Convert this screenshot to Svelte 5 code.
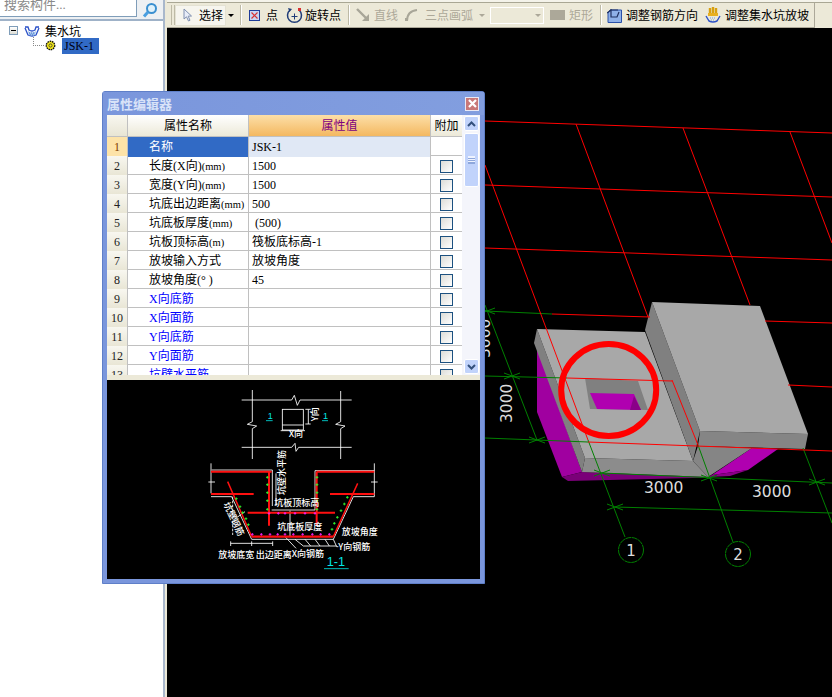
<script>
  const rows = [
    { n: 1, name: "名称", unit: "", value: "JSK-1", check: false },
    { n: 2, name: "长度(X向)", unit: "(mm)", value: "1500", check: true },
    { n: 3, name: "宽度(Y向)", unit: "(mm)", value: "1500", check: true },
    { n: 4, name: "坑底出边距离", unit: "(mm)", value: "500", check: true },
    { n: 5, name: "坑底板厚度", unit: "(mm)", value: " (500)", check: true },
    { n: 6, name: "坑板顶标高", unit: "(m)", value: "筏板底标高-1", check: true },
    { n: 7, name: "放坡输入方式", unit: "", value: "放坡角度", check: true },
    { n: 8, name: "放坡角度(° )", unit: "", value: "45", check: true },
    { n: 9, name: "X向底筋", unit: "", value: "", check: true, link: true },
    { n: 10, name: "X向面筋", unit: "", value: "", check: true, link: true },
    { n: 11, name: "Y向底筋", unit: "", value: "", check: true, link: true },
    { n: 12, name: "Y向面筋", unit: "", value: "", check: true, link: true },
    { n: 13, name: "坑壁水平筋", unit: "", value: "", check: true, link: true }
  ];

  // scene segments in page coordinates
  const red = [
    [485, 121, 832, 133], [485, 185, 832, 197], [485, 248, 832, 260],
    [552, 314, 650, 317], [765, 321, 832, 323],
    [567, 378, 672, 381], [788, 385, 832, 387],
    [588, 442, 832, 451],
    [485, 165, 588, 440],
    [576, 124, 648, 317], [672, 380, 698, 445],
    [683, 128, 750, 305],
    [790, 132, 832, 243]
  ];
  const green = [
    [485, 311, 552, 314], [485, 376, 567, 378], [485, 438, 588, 442],
    [602, 473, 832, 483], [615, 507, 832, 513],
    [485, 305, 537, 440],
    [588, 440, 625, 537], [698, 445, 733, 542], [803, 448, 832, 523]
  ];
  const ticks = [
    [487, 311], [512, 376], [537, 440], [602, 473], [615, 507], [709, 478], [817, 482]
  ];

  const greenDots = [
    [232, 292], [232, 314], [232, 338], [232, 362], [232, 388],
    [381, 292], [381, 314], [381, 338], [381, 362], [381, 388],
    [139, 356], [150, 380], [158, 398], [168, 416], [175, 434],
    [472, 352], [463, 372], [453, 392], [442, 412], [433, 430], [426, 448]
  ];
  const pinkDots = [
    [237, 400], [265, 400], [285, 400], [315, 400], [345, 400], [375, 400],
    [187, 463], [214, 463], [240, 463], [263, 463], [285, 463], [310, 463], [338, 463], [367, 463], [392, 463], [418, 463]
  ];
</script>

<div class="app">
  <aside class="side">
    <div class="search">
      <div class="search-box">搜索构件...</div>
      <div class="search-btn">
        <svg width="16" height="16" viewBox="0 0 16 16">
          <circle cx="9.5" cy="6.5" r="4.5" fill="#dff1fb" stroke="#3a8fd0" stroke-width="2" />
          <path d="M6 10 L2 14.5" stroke="#4a9fe0" stroke-width="3" />
        </svg>
      </div>
    </div>
    <div class="tree">
      <div class="node">
        <span class="toggle"></span>
        <svg width="16" height="13" viewBox="0 0 16 13">
          <path d="M1 3 H4 L5 6 Q8 8 11 6 L12 3 H15 M1 4 L4 11 Q8 13 12 11 L15 4" fill="none" stroke="#2a50c8" stroke-width="1.3" />
          <path d="M4 7 Q8 10 12 7 L11 11 Q8 12 5 11 Z" fill="#9cc0ea" />
          <path d="M5 9 H11 M6 11 H10" stroke="#3060c0" stroke-width=".8" stroke-dasharray="1 1" />
        </svg>
        <span class="node-text">集水坑</span>
      </div>
      <div class="node child">
        <span class="dots"></span>
        <svg width="11" height="11" viewBox="0 0 11 11">
          <circle cx="5.5" cy="5.5" r="4.2" fill="#f4e818" stroke="#111" stroke-width="1.4" stroke-dasharray="1.6 .7" />
          <circle cx="5.5" cy="5.5" r="1.6" fill="#f4e818" stroke="#333" stroke-width=".8" />
        </svg>
        <span class="picked">JSK-1</span>
      </div>
    </div>
  </aside>

  <main class="main">
    <div class="topline"></div>
    <div class="toolbar">
      <div class="bar">
        <span class="grip"></span>
        <div class="tool active">
          <svg width="10" height="14" viewBox="0 0 10 14">
            <path d="M1 1 V11 L3.5 8.8 L5.5 13 L7 12.3 L5.2 8.2 L8.5 8 Z" fill="#e8edf8" stroke="#8090b0" />
          </svg>
          <span>选择</span>
        </div>
        <span class="arrow dark"></span>
        <span class="sep s1"></span>
        <svg class="ic-point" width="11" height="11" viewBox="0 0 11 11">
          <rect x=".5" y=".5" width="10" height="10" fill="#c8d4f4" stroke="#1f3c98" />
          <path d="M2.5 2.5 L8.5 8.5 M8.5 2.5 L2.5 8.5" stroke="#d83030" stroke-width="1.2" />
        </svg>
        <span class="label l-point">点</span>
        <svg class="ic-rot" width="17" height="17" viewBox="0 0 17 17">
          <path d="M4 3 A7 7 0 1 0 13 3" fill="none" stroke="#1f3c78" stroke-width="1.5" />
          <path d="M2 1 L6 2 L3.5 5 Z" fill="#1f3c78" />
          <path d="M8.5 6.5 V12.5 M5.5 9.5 H11.5" stroke="#1f3c78" />
          <rect x="12" y="1" width="3" height="3" fill="#d83030" />
        </svg>
        <span class="label l-rot">旋转点</span>
        <span class="sep s2"></span>
        <svg class="ic-line" width="14" height="14" viewBox="0 0 14 14">
          <path d="M1 1 L11 11" stroke="#a8a698" stroke-width="2.4" />
          <path d="M13 6 V13 H6 Z" fill="#a8a698" />
        </svg>
        <span class="label off l-line">直线</span>
        <svg class="ic-arc" width="13" height="14" viewBox="0 0 13 14">
          <path d="M2 13 Q2 3 12 2" fill="none" stroke="#a8a698" stroke-width="2" />
          <rect x="0" y="10" width="3" height="3" fill="#a8a698" />
        </svg>
        <span class="label off l-arc">三点画弧</span>
        <span class="arrow l-a"></span>
        <div class="combo"><span class="arrow"></span></div>
        <span class="rect-ic"></span>
        <span class="label off l-rect">矩形</span>
        <span class="sep s3"></span>
        <svg class="ic-dir" width="15" height="15" viewBox="0 0 15 15">
          <path d="M3 2 H14.5 V14.5 H1 V5 Z" fill="#8fb0e8" stroke="#2a50a8" />
          <path d="M0 5 L4 2 H11 M4 1 V9 H10 L12 4" fill="none" stroke="#203060" stroke-width="1.2" />
        </svg>
        <span class="label l-dir">调整钢筋方向</span>
        <svg class="ic-slope" width="16" height="16" viewBox="0 0 16 16">
          <path d="M5 1 V8 M8 0 V8 M11 1 V8" stroke="#d8a010" stroke-width="2.4" />
          <path d="M3 6 H13 V9 H3 Z" fill="#e8b020" />
          <path d="M1 9 L4 14 Q8 16 12 14 L15 9" fill="none" stroke="#2a50c8" stroke-width="1.4" />
          <path d="M5 11 H11 M6 13 H10" stroke="#6f9fe0" stroke-dasharray="1 1" />
        </svg>
        <span class="label l-slope">调整集水坑放坡</span>
      </div>
    </div>

    <svg class="scene" width="665" height="669" viewBox="167 28 665 669">
      <text class="dim" transform="translate(490 358) rotate(-90)">3000</text>
      <!-- magenta underside -->
      <polygon fill="#a000a0" points="537,348 537,412 562,477 582,472" />
      <polygon fill="#7a0078" points="562,477 568,481 693,478 708,477 582,472" />
      <polygon fill="#b000b0" points="712,475 752,448 778,449 748,470" />
      <polygon fill="#8a0088" points="708,477 712,475 748,470 730,476" />
      <!-- lower slab -->
      <polygon fill="#808080" points="537,329 534,343 582,472 585,458" />
      <polygon fill="#8c8c8c" points="585,458 693,461 708,477 582,472" />
      <polygon fill="#858585" points="693,461 698,446 752,448 708,477" />
      <polygon fill="#a8a8a8" points="537,329 645,332 693,461 585,458" />
      <!-- hole -->
      <polygon fill="#808080" points="585,378 638,381 648,410 590,409" />
      <polygon fill="#b000b0" points="590,393 634,394 641,410 597,409" />
      <polygon fill="#8a0088" points="634,396 641,410 630,410" />
      <!-- tall block -->
      <polygon fill="#808080" points="652,302 645,330 693,461 700,431" />
      <polygon fill="#858585" points="700,431 808,434 805,449 698,446" />
      <polygon fill="#a8a8a8" points="652,302 760,306 808,434 700,431" />

      {#each green as [x1, y1, x2, y2]}
        <line {x1} {y1} {x2} {y2} stroke="#008000" />
      {/each}
      {#each ticks as [x, y]}
        <path d="M{x - 8} {y + 3} L{x + 8} {y - 3} M{x - 8} {y - 3} L{x + 8} {y + 3}" stroke="#008000" />
      {/each}
      {#each red as [x1, y1, x2, y2]}
        <line {x1} {y1} {x2} {y2} stroke="#ff0000" />
      {/each}
      <ellipse cx="608.7" cy="390" rx="47.5" ry="46" fill="none" stroke="#ff0000" stroke-width="6" />

      <text class="dim" transform="translate(512 423) rotate(-90)">3000</text>
      <text class="dim" x="644" y="493">3000</text>
      <text class="dim" x="752" y="497">3000</text>

      <circle cx="631" cy="550" r="12.5" fill="#000" stroke="#008000" stroke-dasharray="6 .6" />
      <circle cx="738" cy="554" r="12.5" fill="#000" stroke="#008000" stroke-dasharray="6 .6" />
      <text class="axis" x="631" y="556">1</text>
      <text class="axis" x="738" y="560">2</text>
    </svg>
  </main>

  <section class="dialog">
    <header class="title">
      <span>属性编辑器</span>
      <span class="close">
        <svg width="11" height="11" viewBox="0 0 11 11">
          <path d="M2 2 L9 9 M9 2 L2 9" stroke="#fff" stroke-width="2.2" />
        </svg>
      </span>
    </header>
    <div class="body">
      <div class="grid-wrap">
        <div class="grid">
          <div class="row head">
            <div class="num"></div>
            <div class="cell center">属性名称</div>
            <div class="cell center val-head">属性值</div>
            <div class="cell center add">附加</div>
          </div>
          {#each rows as r}
            <div class="row" class:sel={r.n === 1}>
              <div class="num">{r.n}</div>
              <div class="cell name" class:link={r.link}>{r.name}<span class="unit">{r.unit}</span></div>
              <div class="cell val">{r.value}</div>
              <div class="cell add">
                {#if r.check}<span class="box"></span>{/if}
              </div>
            </div>
          {/each}
        </div>
        <div class="scroll">
          <div class="sbtn">
            <svg width="9" height="6" viewBox="0 0 9 6"><path d="M1 5 L4.5 1.5 L8 5" fill="none" stroke="#33507c" stroke-width="2" /></svg>
          </div>
          <div class="thumb"><span></span></div>
          <div class="sbtn bottom">
            <svg width="9" height="6" viewBox="0 0 9 6"><path d="M1 1 L4.5 4.5 L8 1" fill="none" stroke="#33507c" stroke-width="2" /></svg>
          </div>
        </div>
      </div>
      <div class="preview">
        <svg width="220" height="199" viewBox="0 0 660 597">
          <g stroke="#fff" stroke-width="2.6" fill="none">
            <path d="M155 60 H305 L313 46 L322 76 L330 60 H485" />
            <path d="M155 202 H305 L315 190 L318 214 L326 202 H485" />
            <path d="M187 30 V125 L172 133 L200 138 L187 146 V237" />
            <path d="M452 33 V125 L437 133 L465 138 L452 146 V237" />
            <rect x="277" y="88" width="63" height="62" />
            <path d="M277 135 H340" />
            <path d="M346 88 H362 M355 88 V132 M346 132 H362" />
            <path d="M272 152 H345" />
            <path d="M63 250 V340 M553 250 V350 M55 306 H75 M543 306 H563" />
            <path d="M65 270 H247 V378 M245 390 H375 V272 H553" />
            <path d="M63 350 H125 L185 478 H430 L490 350 H553" />
            <path d="M258 280 V378 M300 392 V470" />
            <path d="M122 490 H248 M122 484 V498 M185 484 V498 M248 484 V498" />
            <path d="M430 478 L440 500 H445 M285 470 L318 505 M315 478 L340 498 H440 M345 478 L362 498 M375 478 L390 498 M405 478 L418 498" />
            <path d="M128 350 V465" stroke-dasharray="8 4" />
            <path d="M130 420 L165 395" />
          </g>
          <g stroke="#ff1010" fill="none" stroke-width="6">
            <path d="M63 275 H245 M380 275 H553 M63 342 H191 M420 342 H553 M173 398 H435" />
            <path d="M237 275 V437 M380 275 V437" />
            <path d="M185 470 H430" stroke-width="7" />
          </g>
          <path d="M113 305 L185 470 M503 310 L430 470" stroke="#ff1010" stroke-width="4.5" fill="none" />
          {#each greenDots as [x, y]}
            <path d="M{x - 4} {y} H{x + 4} M{x} {y - 4} V{y + 4}" stroke="#30ff30" stroke-width="2.6" />
          {/each}
          {#each pinkDots as [x, y]}
            <path d="M{x - 4} {y} H{x + 4} M{x} {y - 4} V{y + 4}" stroke="#ff20ff" stroke-width="2.6" />
          {/each}
          <g class="cad">
            <text transform="translate(284 345) rotate(-90)">坑壁水平筋</text>
            <text x="253" y="379">坑板顶标高</text>
            <text x="262" y="451">坑底板厚度</text>
            <text x="455" y="466">放坡角度</text>
            <text x="445" y="511">Y向钢筋</text>
            <text x="85" y="534">放坡底宽</text>
            <text x="197" y="534">出边距离</text>
            <text x="305" y="531">X向钢筋</text>
            <text x="296" y="171">X向</text>
            <text transform="translate(384 124) rotate(-90)">Y向</text>
            <text transform="translate(100 372) rotate(65)">坑壁钢筋</text>
          </g>
          <g class="cyan">
            <text x="233" y="118">1</text>
            <text x="399" y="118">1</text>
            <text class="big" x="410" y="557">1-1</text>
          </g>
          <path d="M228 122 H248 M396 122 H414 M402 566 H476" stroke="#00e8e8" stroke-width="2.4" />
        </svg>
      </div>
    </div>
  </section>
</div>

<style>
  :global(body) {
    margin: 0;
    background: #000;
  }
  .app {
    position: relative;
    display: flex;
    width: 832px;
    height: 697px;
    overflow: hidden;
    font: 12px "Liberation Serif", "Noto Sans CJK SC", serif;
    color: #000;
    background: #000;
  }

  /* left tree */
  .side {
    width: 163px;
    flex: none;
    background: #fff;
    border-right: 2px solid #a9b8cc;
    box-sizing: content-box;
    margin-right: 2px;
    box-shadow: 2px 0 0 #ece9d8;
    display: flex;
    flex-direction: column;
  }
  .search {
    height: 19px;
    display: flex;
    background: #edf0f3;
    border-bottom: 2px solid #9fb2c8;
  }
  .search-box {
    width: 137px;
    height: 18px;
    margin-top: -1px;
    box-sizing: border-box;
    padding: 0 4px;
    line-height: 11px;
    font-size: 13px;
    color: #8a8a8a;
    background: #fff;
    border-right: 1px solid #7f9db9;
    border-bottom: 1px solid #7f9db9;
    overflow: hidden;
    flex: none;
  }
  .search-btn {
    flex: 1;
    display: flex;
    justify-content: center;
    align-items: center;
  }
  .tree {
    padding: 3px 0 0 9px;
  }
  .node {
    display: flex;
    align-items: center;
    height: 13px;
    position: relative;
  }
  .toggle {
    width: 9px;
    height: 9px;
    box-sizing: border-box;
    border: 1px solid #7f9db9;
    background: linear-gradient(#fff, #dcdcd4);
    margin-right: 6px;
    position: relative;
  }
  .toggle::after {
    content: "";
    position: absolute;
    left: 1px;
    top: 3px;
    width: 5px;
    height: 1px;
    background: #000;
  }
  .node-text {
    margin-left: 5px;
    font-size: 12px;
  }
  .child {
    height: 17px;
    margin: 0 0 0 24px;
  }
  .dots {
    width: 11px;
    height: 9px;
    margin-top: -9px;
    border-left: 1px dotted #888;
    border-bottom: 1px dotted #888;
    box-sizing: border-box;
    margin-right: 1px;
  }
  .picked {
    margin-left: 6px;
    width: 37px;
    height: 16px;
    line-height: 16px;
    padding-left: 2px;
    box-sizing: border-box;
    background: #316ac5;
    color: #001;
  }

  /* toolbar */
  .main {
    flex: 1;
    min-width: 0;
    display: flex;
    flex-direction: column;
  }
  .topline {
    height: 2px;
    background: #f4f3ea;
    flex: none;
  }
  .toolbar {
    height: 26px;
    flex: none;
    background: #ece9d8;
    border-top: 1px solid #a9a794;
    box-sizing: border-box;
  }
  .bar {
    width: 648px;
    height: 25px;
    display: flex;
    align-items: center;
    border-right: 1px solid #aca899;
    border-bottom: 1px solid #aca899;
    box-sizing: border-box;
    padding-left: 4px;
    white-space: nowrap;
  }
  .grip {
    width: 2px;
    height: 20px;
    border: 1px solid #bdbaa6;
    border-width: 0 1px;
  }
  .tool {
    display: flex;
    align-items: center;
    width: 51px;
    height: 21px;
    box-sizing: border-box;
    padding-left: 7px;
    background: #f6f5ee;
    border: 1px solid #e4e2d3;
  }
  .tool span {
    margin-left: 6px;
  }
  .arrow {
    width: 0;
    height: 0;
    border: 3px solid transparent;
    border-top: 3px solid #aca899;
    border-bottom: 0;
  }
  .arrow.dark {
    border-top-color: #000;
    margin-left: 2px;
  }
  .sep {
    width: 1px;
    height: 20px;
    background: #bdbaa6;
    border-right: 1px solid #fff;
  }
  .s1 { margin-left: 6px; }
  .ic-point { margin-left: 7px; }
  .l-point { margin-left: 6px; }
  .ic-rot { margin-left: 8px; }
  .l-rot { margin-left: 2px; }
  .s2 { margin-left: 7px; }
  .ic-line { margin-left: 6px; }
  .l-line { margin-left: 4px; }
  .ic-arc { margin-left: 7px; }
  .l-arc { margin-left: 7px; }
  .l-a { margin-left: 6px; }
  .off { color: #aca899; }
  .combo {
    width: 54px;
    height: 17px;
    margin-left: 5px;
    box-sizing: border-box;
    border: 1px solid #fff;
    display: flex;
    justify-content: flex-end;
    align-items: center;
    padding-right: 2px;
  }
  .rect-ic {
    width: 15px;
    height: 10px;
    margin-left: 6px;
    background: #aca899;
  }
  .l-rect { margin-left: 4px; }
  .s3 { margin-left: 7px; }
  .ic-dir { margin-left: 5px; }
  .l-dir { margin-left: 4px; }
  .ic-slope { margin-left: 7px; }
  .l-slope { margin-left: 4px; }

  /* 3D view */
  .scene {
    display: block;
    flex: none;
  }
  .dim {
    font: 15.5px "DejaVu Sans", sans-serif;
    fill: #ddd;
  }
  .axis {
    font: 15px "DejaVu Sans", sans-serif;
    fill: #ddd;
    text-anchor: middle;
  }

  /* property dialog floats over the view */
  .dialog {
    position: absolute;
    left: 102px;
    top: 91px;
    width: 383px;
    height: 493px;
    box-sizing: border-box;
    background: #7a96dc;
    border: 1px solid #5f7fc8;
    border-radius: 3px 3px 0 0;
    display: flex;
    flex-direction: column;
  }
  .title {
    height: 23px;
    flex: none;
    display: flex;
    align-items: center;
    justify-content: space-between;
    padding: 0 5px 0 4px;
    box-sizing: border-box;
    background: linear-gradient(90deg, #7a96dc, #829edf);
    font-weight: bold;
    font-size: 13px;
    color: #d9e3f8;
  }
  .close {
    width: 12px;
    height: 12px;
    display: flex;
    align-items: center;
    justify-content: center;
    background: #c87878;
    border: 1px solid #e8e8f4;
  }
  .body {
    flex: 1;
    margin: 0 4px 4px;
    display: flex;
    flex-direction: column;
    background: #ece9d8;
  }
  .grid-wrap {
    height: 260px;
    display: flex;
    flex: none;
    background: #fff;
  }
  .grid {
    width: 355px;
    overflow: hidden;
    flex: none;
  }
  .row {
    display: grid;
    grid-template-columns: 21px 121px 182px 31px;
    height: 19px;
    box-sizing: border-box;
    border-bottom: 1px solid #c0c0c0;
    line-height: 20px;
  }
  .row.head {
    height: 22px;
    line-height: 23px;
    background: linear-gradient(#fff, #ece9d8);
  }
  .num {
    text-align: center;
    background: linear-gradient(#f8f7f0, #e8e5d4);
    border-right: 1px solid #c0c0c0;
    color: #222;
  }
  .sel .num {
    background: #fde3a8;
    color: #804000;
  }
  .cell {
    border-right: 1px solid #c0c0c0;
    white-space: pre;
    overflow: hidden;
    box-sizing: border-box;
  }
  .center { text-align: center; }
  .val-head {
    background: linear-gradient(#fcdfa8, #f4b860);
    color: #800080;
  }
  .name { padding-left: 21px; }
  .unit { font-size: 10.5px; }
  .link { color: #0000ff; }
  .val { padding-left: 3px; }
  .sel .name {
    background: #316ac5;
    color: #fff;
  }
  .sel .val { background: #e0e8f5; }
  .add {
    display: flex;
    align-items: center;
    justify-content: center;
    border-right: 0;
  }
  .head .add {
    display: block;
  }
  .box {
    width: 13px;
    height: 13px;
    box-sizing: border-box;
    border: 1px solid #1c5180;
    background: linear-gradient(135deg, #dcdcd7, #fff);
  }
  .scroll {
    flex: 1;
    display: flex;
    flex-direction: column;
    align-items: center;
    padding: 1px 0;
    background: #f4f5fb;
  }
  .sbtn {
    width: 15px;
    height: 15px;
    flex: none;
    border: 1px solid #fff;
    box-sizing: border-box;
    border-radius: 2px;
    background: #c1d3fb;
    display: flex;
    align-items: center;
    justify-content: center;
  }
  .bottom { margin-top: auto; }
  .thumb {
    width: 15px;
    height: 54px;
    margin-top: 2px;
    box-sizing: border-box;
    border: 1px solid #fff;
    border-radius: 2px;
    background: #c1d3fb;
    display: flex;
    align-items: center;
    justify-content: center;
  }
  .thumb span {
    width: 7px;
    height: 6px;
    border-top: 1px solid #eef3ff;
    border-bottom: 1px solid #8fa8dc;
    background: repeating-linear-gradient(#eef3ff 0 1px, #8fa8dc 1px 2px);
  }
  .preview {
    height: 199px;
    margin-top: 5px;
    box-sizing: border-box;
    padding-left: 83px;
    background: #000;
    overflow: hidden;
  }
  .preview svg {
    display: block;
  }
  .cad text {
    font: 500 27px "Noto Sans CJK SC", sans-serif;
    fill: #fff;
  }
  .cyan text {
    font: 27px "Liberation Sans", sans-serif;
    fill: #00e8e8;
  }
  .cyan .big {
    font-size: 38px;
  }
</style>
